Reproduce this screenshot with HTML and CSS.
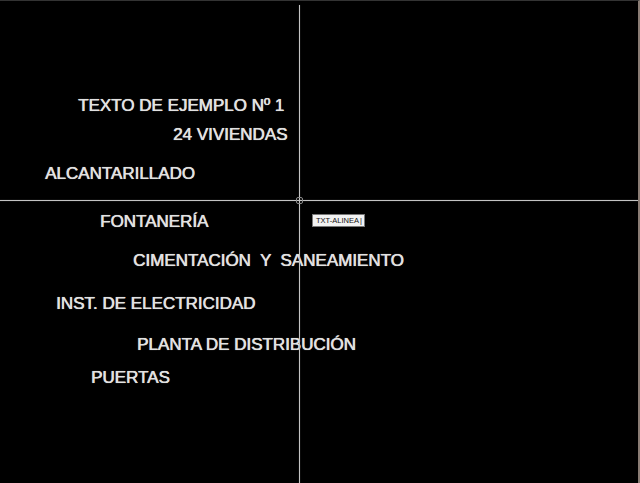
FILE: index.html
```html
<!DOCTYPE html>
<html lang="es">
<head>
<meta charset="utf-8">
<title>Texto</title>
<link rel="stylesheet" href="styles.css">
</head>
<body>
<div class="canvas">
  <div class="label t1">TEXTO DE EJEMPLO Nº 1</div>
  <div class="label t2">24 VIVIENDAS</div>
  <div class="label t3">ALCANTARILLADO</div>
  <div class="label t4">FONTANERÍA</div>
  <div class="label t5">CIMENTACIÓN&nbsp; Y &nbsp;SANEAMIENTO</div>
  <div class="label t6">INST. DE ELECTRICIDAD</div>
  <div class="label t7">PLANTA DE DISTRIBUCIÓN</div>
  <div class="label t8">PUERTAS</div>
  <div class="cross-v"></div>
  <div class="cross-h"></div>
  <div class="pickbox"></div>
  <div class="tooltip">TXT-ALINEA<span class="caret">|</span></div>
</div>
</body>
</html>
```
FILE: styles.css
```css
html, body {
  margin: 0;
  padding: 0;
  background: #000;
}
.canvas {
  position: relative;
  width: 640px;
  height: 483px;
  overflow: hidden;
  background: #000;
  border-top: 1px solid #333;
  box-sizing: border-box;
  border-right: 2px solid #8a7c74;
}
.label {
  position: absolute;
  font-family: "Liberation Sans", Arial, sans-serif;
  font-size: 17px;
  line-height: 17px;
  color: #e2e2e2;
  white-space: nowrap;
  text-shadow: 0.4px 0 0 #e2e2e2, 0 0 1px rgba(220, 220, 220, 0.6);
}
.t1 { left: 78px; top: 96px; }
.t2 { left: 173px; top: 125px; }
.t3 { left: 45px; top: 164px; }
.t4 { left: 100px; top: 212px; }
.t5 { left: 133px; top: 251px; }
.t6 { left: 56px; top: 294px; }
.t7 { left: 137px; top: 335px; }
.t8 { left: 91px; top: 368px; }
.cross-v {
  position: absolute;
  left: 299px;
  top: 4px;
  width: 1px;
  height: 480px;
  background: #c4c4c4;
  box-shadow: 0 0 1px rgba(200, 200, 200, 0.6);
}
.cross-h {
  position: absolute;
  left: 0;
  top: 199px;
  width: 640px;
  height: 1px;
  background: #c4c4c4;
  box-shadow: 0 0 1px rgba(200, 200, 200, 0.6);
}
.pickbox {
  position: absolute;
  left: 296px;
  top: 196px;
  width: 5px;
  height: 5px;
  border: 1px solid #8a8a8a;
  border-radius: 2px;
}
.tooltip {
  position: absolute;
  left: 312px;
  top: 213px;
  width: 53px;
  height: 13px;
  box-sizing: border-box;
  border: 1px solid #777;
  background: #f2f2f2;
  color: #111;
  font-family: "Liberation Sans", Arial, sans-serif;
  font-size: 7.5px;
  line-height: 11px;
  padding-left: 3px;
  white-space: nowrap;
}
.caret {
  margin-left: 1px;
}
```
